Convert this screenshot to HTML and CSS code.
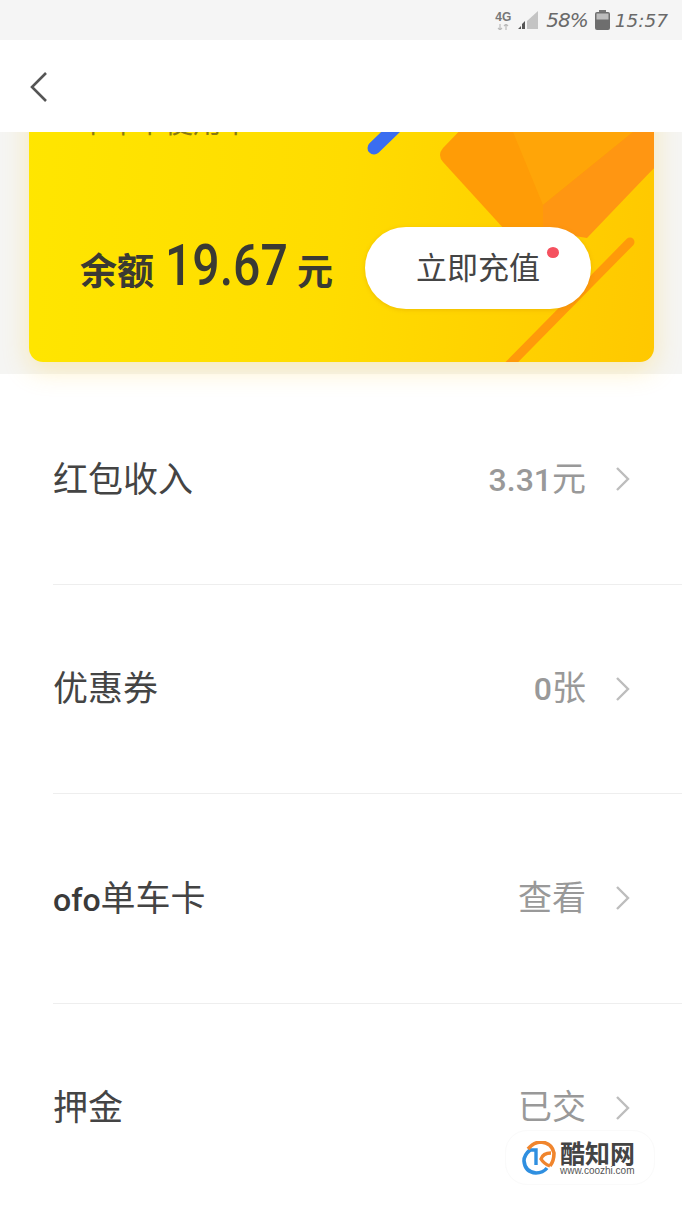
FILE: index.html
```html
<!DOCTYPE html>
<html lang="zh-CN">

<head>
    <meta charset="UTF-8" />
    <meta name="viewport" content="width=device-width, initial-scale=1.0" />
    <title>我的钱包</title>
    <link rel="stylesheet" href="styles.css">
</head>

<body>

    <div class="status-bar">
        <div class="net">
            <span class="net-label">4G</span>
            <svg class="net-arrows" width="14" height="6" viewBox="0 0 14 6">
                <path d="M4 0v6M2 4l2 2 2-2M10 6V0M8 2l2-2 2 2" fill="none" stroke="#bbb" stroke-width="1.2" />
            </svg>
        </div>
        <svg class="signal" width="20" height="20" viewBox="0 0 20 20">
            <path d="M20 1v18H9V11z" fill="#c4c4c4" />
            <path d="M0 19l3-3v3zM4 19v-5l3-3v8z" fill="#555" />
        </svg>
        <span class="battery-text">58%</span>
        <svg class="battery" width="15" height="20" viewBox="0 0 15 20">
            <rect x="4" y="0" width="7" height="2" fill="#777" />
            <rect x="0" y="2" width="15" height="18" rx="2" fill="#6e6e6e" />
            <rect x="1.5" y="3.5" width="12" height="6" fill="#bdbdbd" />
        </svg>
        <span class="clock">15:57</span>
    </div>

    <header class="nav">
        <svg width="20" height="32" viewBox="0 0 20 32">
            <path d="M17 2L3 16l14 14" fill="none" stroke="#555" stroke-width="2.6" />
        </svg>
    </header>

    <section class="hero">
        <div class="card">
            <svg class="card-art" width="625" height="330" viewBox="29 32 625 330">
                <path d="M470 120L443 148q-6 7 0 14l62 68q3 3 8 3h70l71-65V120z" fill="#ff9c06" />
                <path d="M513 132l30 73 90-73z" fill="#ffa508" />
                <path d="M654 132v36l-67 70-37-6h-7v-27l90-73z" fill="#ff9612" />
                <path d="M405 118l-31 30" stroke="#3a6df0" stroke-width="13" stroke-linecap="round" />
                <path d="M630 242L508 366" stroke="#ff9a0a" stroke-width="9" stroke-linecap="round" />
            </svg>
            <p class="card-note">半年卡使用中</p>
            <div class="card-foot">
                <div class="balance">
                    <span class="balance-label">余额</span>
                    <span class="balance-num">19.67</span>
                    <span class="balance-unit">元</span>
                </div>
                <button class="recharge">立即充值<i class="red-dot"></i></button>
            </div>
        </div>
    </section>

    <ul class="menu">
        <li class="menu-row">
            <span class="menu-name">红包收入</span>
            <span class="menu-value"><b class="latin">3.31</b>元</span>
            <svg class="chevron" width="16" height="26" viewBox="0 0 16 26">
                <path d="M2 2l11 11L2 24" fill="none" stroke="#bdbdbd" stroke-width="2.4" />
            </svg>
        </li>
        <li class="menu-row">
            <span class="menu-name">优惠券</span>
            <span class="menu-value"><b class="latin">0</b>张</span>
            <svg class="chevron" width="16" height="26" viewBox="0 0 16 26">
                <path d="M2 2l11 11L2 24" fill="none" stroke="#bdbdbd" stroke-width="2.4" />
            </svg>
        </li>
        <li class="menu-row">
            <span class="menu-name"><b class="latin">ofo</b>单车卡</span>
            <span class="menu-value">查看</span>
            <svg class="chevron" width="16" height="26" viewBox="0 0 16 26">
                <path d="M2 2l11 11L2 24" fill="none" stroke="#bdbdbd" stroke-width="2.4" />
            </svg>
        </li>
        <li class="menu-row">
            <span class="menu-name">押金</span>
            <span class="menu-value">已交</span>
            <svg class="chevron" width="16" height="26" viewBox="0 0 16 26">
                <path d="M2 2l11 11L2 24" fill="none" stroke="#bdbdbd" stroke-width="2.4" />
            </svg>
        </li>
    </ul>

    <div class="watermark">
        <svg width="34" height="34" viewBox="0 0 34 34">
            <path d="M8 9Q2 14 2 20q1 11 12 12 7 0 11-5" fill="none" stroke="#2f8fe0" stroke-width="3.6" />
            <path d="M6 9h8v15" fill="none" stroke="#2f8fe0" stroke-width="3.4" />
            <path d="M6 8Q12 1 19 1q11 1 13 11 0 8-4 13" fill="none" stroke="#f0852d" stroke-width="3.6" />
            <path d="M29 12q-8 0-10 6 3 5 9 7" fill="none" stroke="#f0852d" stroke-width="3.4" />
        </svg>
        <div class="watermark-text">
            <span class="watermark-name">酷知网</span>
            <span class="watermark-url">www.coozhi.com</span>
        </div>
    </div>

</body>

</html>
```

FILE: styles.css
```css
* {
    box-sizing: border-box;
}

body {
    margin: 0;
    width: 682px;
    height: 1212px;
    overflow: hidden;
    position: relative;
    font-family: "Noto Sans CJK SC", "Noto Sans", sans-serif;
    background-color: #fff;
    color: #444;
}

.status-bar {
    height: 40px;
    padding: 0 14px 0 0;
    background-color: #f5f5f5;
    display: flex;
    align-items: center;
    justify-content: flex-end;
    color: #6a6a6a;
    position: relative;
    z-index: 2;
}

.net {
    display: flex;
    flex-direction: column;
    align-items: center;
    margin-right: 7px;
}

.net-label {
    font-family: "Liberation Sans", sans-serif;
    font-size: 12px;
    font-weight: bold;
    line-height: 12px;
    color: #777;
}

.net-arrows {
    margin-top: 1px;
}

.signal {
    margin-right: 8px;
}

.battery-text {
    font-family: "DejaVu Sans", sans-serif;
    font-style: italic;
    font-size: 20px;
    letter-spacing: -1px;
    margin-right: 7px;
}

.battery {
    margin-right: 5px;
}

.clock {
    font-family: "DejaVu Sans", sans-serif;
    font-style: italic;
    font-size: 18.5px;
}

.nav {
    height: 92px;
    background-color: #fff;
    padding-left: 29px;
    display: flex;
    align-items: center;
    position: relative;
    z-index: 2;
}

.nav svg {
    margin-top: 2px;
}

.hero {
    display: flow-root;
    height: 242px;
    padding: 0 28px 0 29px;
    background-color: #f5f5f3;
    position: relative;
    z-index: 1;
}

.card {
    height: 330px;
    margin-top: -100px;
    position: relative;
    border-radius: 14px;
    background: linear-gradient(95deg, #ffe600 0%, #ffdc00 50%, #ffc800 100%);
    box-shadow: 0 8px 26px rgba(255, 205, 50, 0.3);
    overflow: hidden;
}

.card-art {
    position: absolute;
    left: 0;
    top: 0;
}

.card-note {
    position: absolute;
    left: 50px;
    top: 71px;
    margin: 0;
    font-size: 28.5px;
    line-height: 36px;
    color: #8a7a10;
}

.card-foot {
    position: absolute;
    left: 51px;
    right: 63px;
    bottom: 53px;
    display: flex;
    align-items: center;
    justify-content: space-between;
}

.balance {
    display: flex;
    align-items: baseline;
    margin-top: -6px;
    color: #3a3a33;
    font-weight: bold;
}

.balance-label {
    font-size: 37px;
}

.balance-num {
    width: 121px;
    margin: 0 11px;
    font-family: "Roboto", sans-serif;
    font-weight: 500;
    font-size: 58px;
    white-space: nowrap;
    transform: scaleX(0.83);
    transform-origin: left;
}

.balance-unit {
    font-size: 36px;
}

.recharge {
    position: relative;
    width: 226px;
    height: 82px;
    padding: 0 0 6px;
    border: none;
    border-radius: 41px;
    background-color: #fff;
    font-family: inherit;
    font-size: 31px;
    color: #444;
    box-shadow: 0 1px 4px rgba(200, 130, 0, 0.3);
}

.red-dot {
    position: absolute;
    left: 182px;
    top: 20px;
    width: 12px;
    height: 11px;
    border-radius: 50%;
    background-color: #f5515f;
}

.menu {
    list-style: none;
    margin: 0;
    padding: 1px 0 0 53px;
}

.menu-row {
    height: 209.5px;
    padding: 0 51px 0 0;
    border-bottom: 1px solid #eee;
    display: flex;
    align-items: center;
}

.menu-name {
    flex: 1;
    font-size: 35px;
    color: #444;
    margin-top: -6px;
}

.menu-value {
    font-size: 34px;
    color: #999;
    margin-top: -6px;
}

.latin {
    font-family: "Roboto", sans-serif;
    font-weight: 500;
    font-size: 32px;
}

.menu-name .latin {
    color: #3a3a3a;
}

.chevron {
    margin-left: 29px;
}

.watermark {
    position: absolute;
    left: 505px;
    top: 1130px;
    width: 150px;
    height: 55px;
    padding-left: 16px;
    border: 1px solid #fafafa;
    border-radius: 22px;
    display: flex;
    align-items: center;
    gap: 4px;
}

.watermark-text {
    display: flex;
    flex-direction: column;
}

.watermark-name {
    font-size: 25px;
    line-height: 26px;
    font-weight: bold;
    color: #444;
}

.watermark-url {
    font-family: "Liberation Sans", sans-serif;
    font-size: 10px;
    line-height: 11px;
    color: #555;
}
```
